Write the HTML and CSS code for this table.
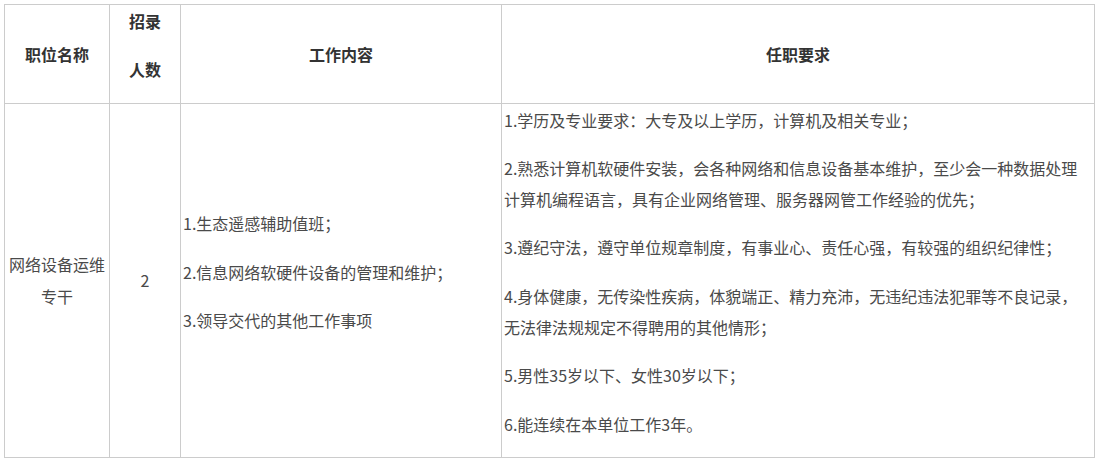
FILE: index.html
```html
<!DOCTYPE html>
<html lang="zh-CN">
<head>
<meta charset="utf-8">
<title>职位表</title>
<link rel="stylesheet" href="styles.css">
</head>
<body>
<div class="page">
  <table class="jobs">
    <colgroup>
      <col class="c-name">
      <col class="c-num">
      <col class="c-work">
      <col class="c-req">
    </colgroup>
    <thead>
      <tr>
        <th><p class="single">职位名称</p></th>
        <th><p>招录</p><p>人数</p></th>
        <th><p class="single">工作内容</p></th>
        <th><p class="single">任职要求</p></th>
      </tr>
    </thead>
    <tbody>
      <tr>
        <td class="center"><p class="single">网络设备运维专干</p></td>
        <td class="center"><p class="single">2</p></td>
        <td class="left">
          <p>1.生态遥感辅助值班；</p>
          <p>2.信息网络软硬件设备的管理和维护；</p>
          <p>3.领导交代的其他工作事项</p>
        </td>
        <td class="left">
          <p>1.学历及专业要求：大专及以上学历，计算机及相关专业；</p>
          <p>2.熟悉计算机软硬件安装，会各种网络和信息设备基本维护，至少会一种数据处理计算机编程语言，具有企业网络管理、服务器网管工作经验的优先；</p>
          <p>3.遵纪守法，遵守单位规章制度，有事业心、责任心强，有较强的组织纪律性；</p>
          <p>4.身体健康，无传染性疾病，体貌端正、精力充沛，无违纪违法犯罪等不良记录，无法律法规规定不得聘用的其他情形；</p>
          <p>5.男性35岁以下、女性30岁以下；</p>
          <p>6.能连续在本单位工作3年。</p>
        </td>
      </tr>
    </tbody>
  </table>
</div>
</body>
</html>
```

FILE: styles.css
```css
html, body {
  margin: 0;
  padding: 0;
  background: #ffffff;
}

.page {
  padding: 4px;
}

.jobs {
  border-collapse: collapse;
  table-layout: fixed;
  width: 1090px;
  font-family: "Noto Sans CJK SC", "Noto Sans", sans-serif;
  font-size: 16px;
  color: #4a4a4a;
}

.c-name { width: 105px; }
.c-num { width: 71px; }
.c-work { width: 321px; }
.c-req { width: 593px; }

.jobs th,
.jobs td {
  border: 1px solid #cccccc;
  padding: 1px 2px 0;
  vertical-align: middle;
}

.jobs th {
  text-align: center;
  font-weight: bold;
  color: #333333;
}

.jobs td.center {
  text-align: center;
}

.jobs td.left {
  text-align: left;
}

.jobs p {
  margin: 0 0 17px;
  line-height: 31.3px;
}

.jobs p.single {
  margin: 0;
}
```
